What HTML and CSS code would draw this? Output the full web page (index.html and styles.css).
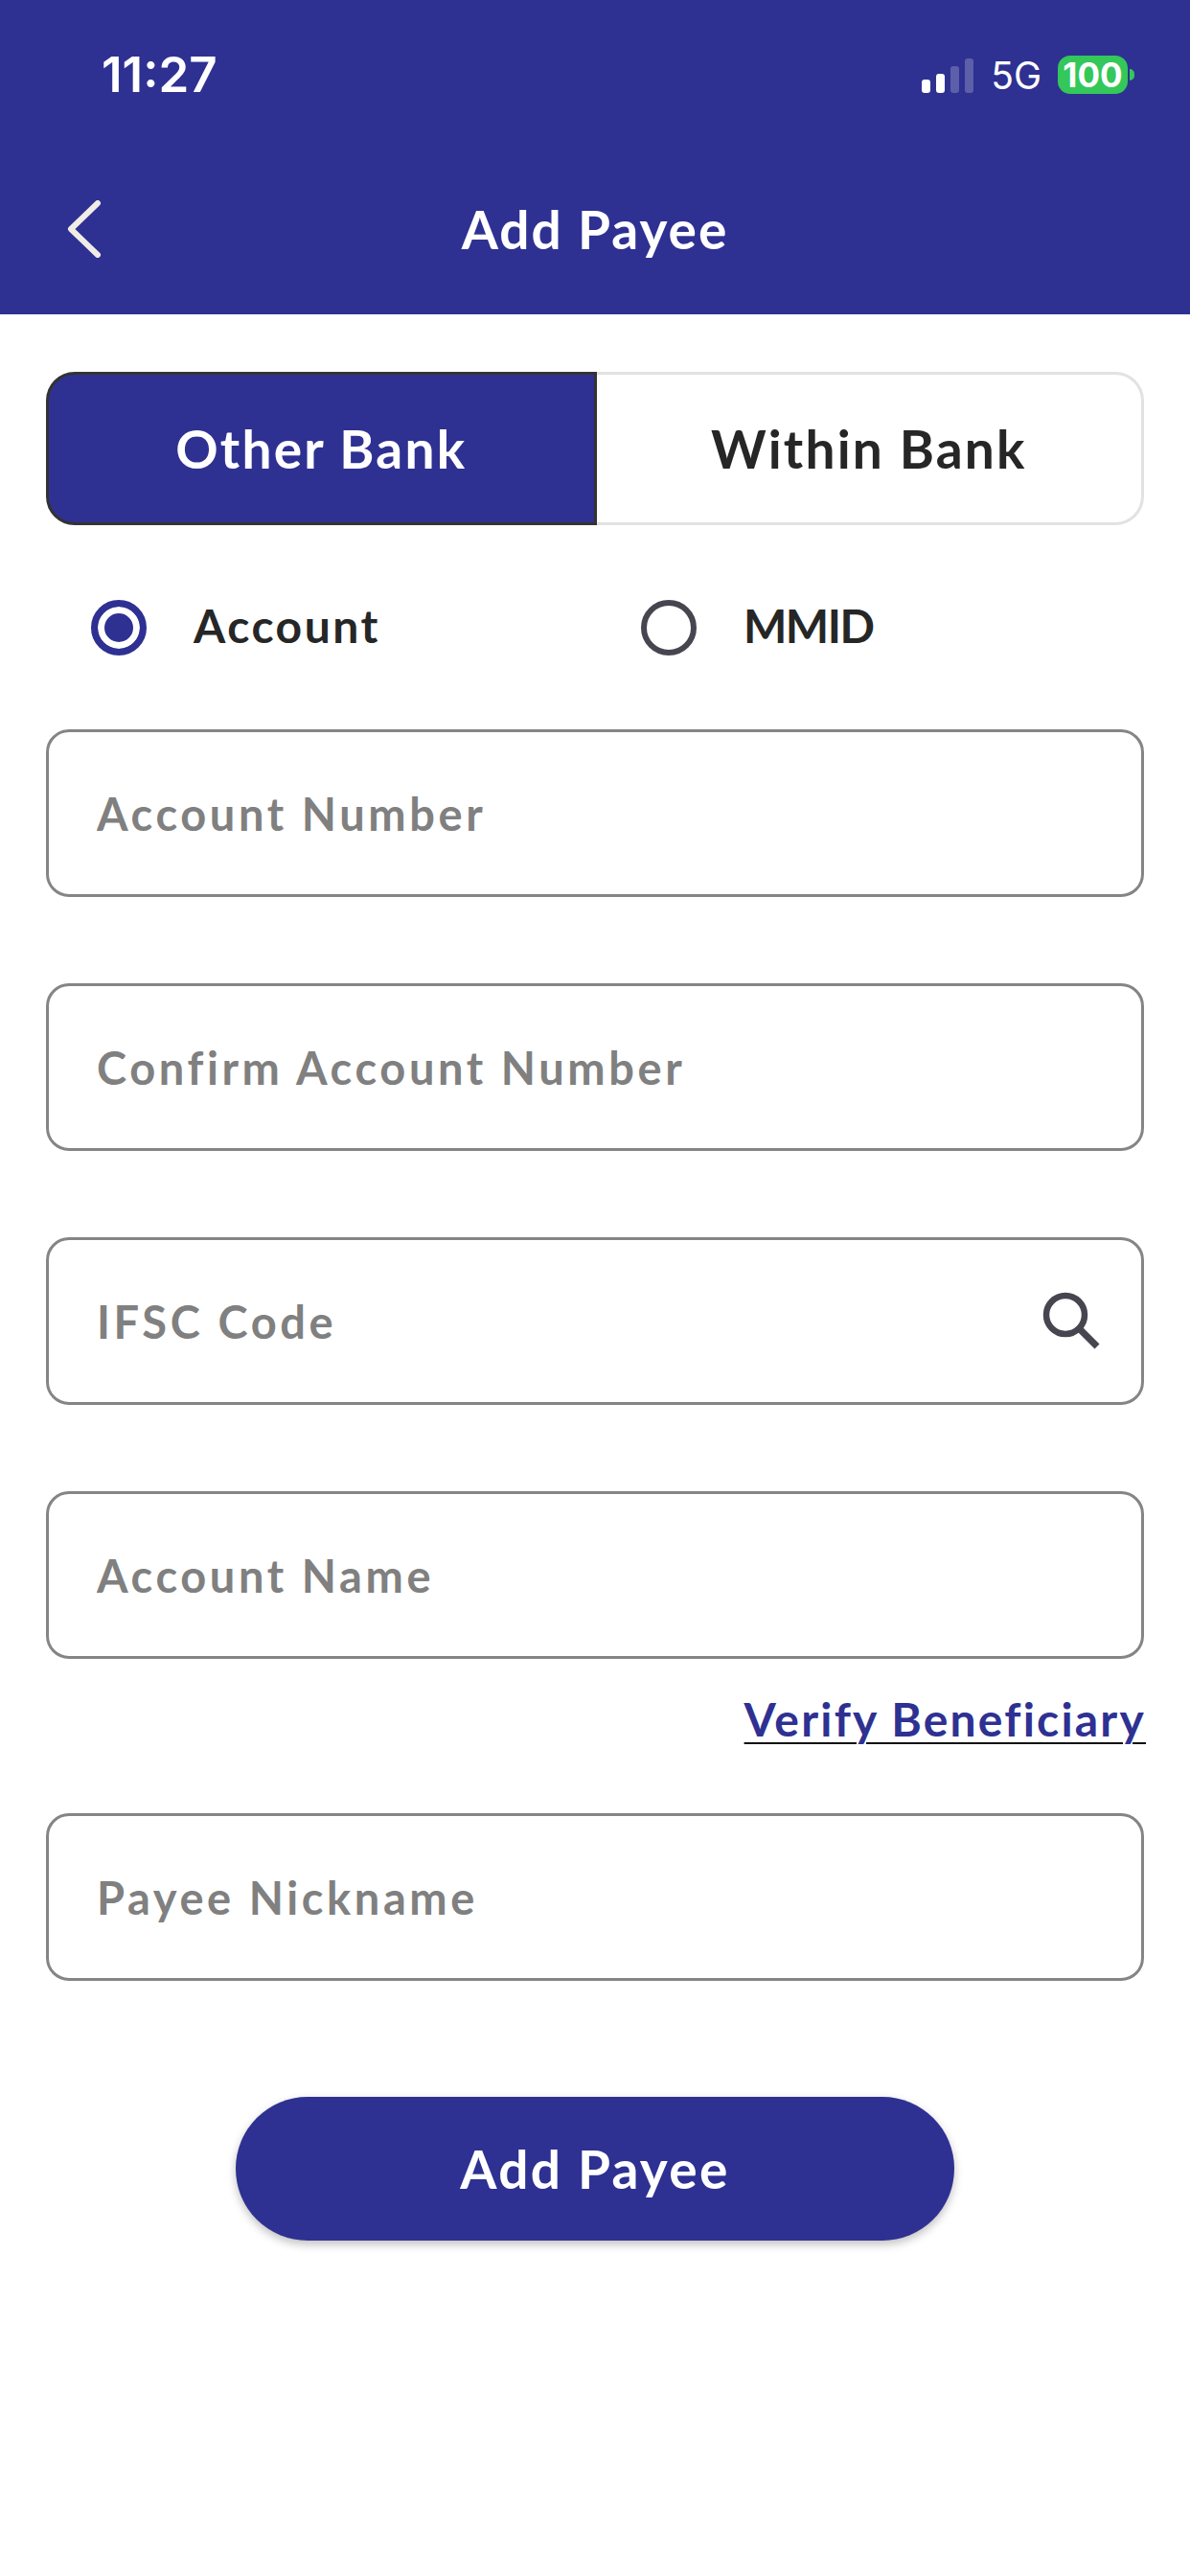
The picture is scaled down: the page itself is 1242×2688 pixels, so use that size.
FILE: index.html
```html
<!DOCTYPE html>
<html lang="en">
<head>
    <meta charset="UTF-8">
    <meta name="viewport" content="width=device-width, initial-scale=1.0">
    <title>Add Payee</title>
    <link rel="stylesheet" href="styles.css">
</head>
<body>
    <header class="header">
        <div class="status-bar">
            <span class="time">11:27</span>
            <div class="status-icons">
                <div class="signal">
                    <i class="bar bar-1"></i>
                    <i class="bar bar-2"></i>
                    <i class="bar bar-3"></i>
                    <i class="bar bar-4"></i>
                </div>
                <span class="network">5G</span>
                <div class="battery">
                    <span class="battery-level">100</span>
                    <i class="battery-nub"></i>
                </div>
            </div>
        </div>
        <div class="title-bar">
            <svg class="back" width="36" height="60" viewBox="0 0 36 60">
                <path d="M32 3 L4 30 L32 57" fill="none" stroke="#f0ece6" stroke-width="6" stroke-linecap="round" stroke-linejoin="round"/>
            </svg>
            <h1 class="title">Add Payee</h1>
        </div>
    </header>

    <main class="content">
        <div class="tabs">
            <button class="tab tab-active">Other Bank</button>
            <button class="tab tab-idle">Within Bank</button>
        </div>

        <div class="radios">
            <div class="radio-option">
                <span class="radio radio-on"></span>
                <span class="radio-label">Account</span>
            </div>
            <div class="radio-option">
                <span class="radio"></span>
                <span class="radio-label radio-label-caps">MMID</span>
            </div>
        </div>

        <form class="form">
            <label class="field"><input type="text" placeholder="Account Number"></label>
            <label class="field"><input type="text" placeholder="Confirm Account Number"></label>
            <label class="field">
                <input type="text" placeholder="IFSC Code">
                <svg class="search" width="64" height="64" viewBox="0 0 64 64">
                    <circle cx="25" cy="25" r="20" fill="none" stroke="#47454f" stroke-width="6.5"/>
                    <path d="M40 40 L58 58" fill="none" stroke="#47454f" stroke-width="7"/>
                </svg>
            </label>
            <div class="field-group">
                <label class="field"><input type="text" placeholder="Account Name"></label>
                <a class="verify" href="#">Verify Beneficiary</a>
            </div>
            <label class="field"><input type="text" placeholder="Payee Nickname"></label>
        </form>

        <button class="submit">Add Payee</button>
    </main>
</body>
</html>
```

FILE: styles.css
```css
* {
    box-sizing: border-box;
}

body {
    margin: 0;
    height: 2688px;
    background-color: #fff;
    font-family: Lato, "Noto Sans", sans-serif;
    color: #262626;
}

.header {
    height: 328px;
    background-color: #2e3192;
    color: #fff;
}

.status-bar {
    height: 150px;
    padding: 58px 58px 0 106px;
    display: flex;
    justify-content: space-between;
}

.time {
    font-family: Inter, sans-serif;
    font-size: 51px;
    font-weight: 600;
    line-height: 40px;
}

.status-icons {
    display: flex;
    align-items: flex-start;
    height: 40px;
}

.signal {
    display: flex;
    align-items: flex-end;
    gap: 6px;
    height: 39px;
    margin-right: 18px;
}

.bar {
    width: 9px;
    background-color: #fff;
    border-radius: 3px;
}

.bar-1 { height: 14px; }
.bar-2 { height: 20px; }
.bar-3 { height: 28px; background-color: #5d5fa8; }
.bar-4 { height: 36px; background-color: #5d5fa8; }

.network {
    font-family: Inter, sans-serif;
    font-size: 39px;
    line-height: 42px;
    margin-right: 17px;
}

.battery {
    display: flex;
    align-items: center;
    gap: 2px;
}

.battery-level {
    width: 73px;
    height: 40px;
    background-color: #34c759;
    border-radius: 13px;
    font-family: Inter, sans-serif;
    font-size: 35px;
    font-weight: 700;
    line-height: 40px;
    text-align: center;
}

.battery-nub {
    width: 5px;
    height: 12px;
    background-color: #34c759;
    border-radius: 0 6px 6px 0;
}

.title-bar {
    height: 178px;
    display: grid;
    grid-template-columns: 1fr auto 1fr;
    align-items: center;
    padding: 0 70px;
}

.title {
    margin: 0;
    font-size: 55px;
    font-weight: 700;
    letter-spacing: 2px;
}

.content {
    padding: 60px 48px 0;
}

.tabs {
    display: flex;
    height: 160px;
}

.tab {
    flex: 1;
    font-family: inherit;
    font-size: 55px;
    font-weight: 700;
    letter-spacing: 2.2px;
}

.tab-active {
    background-color: #2e3192;
    color: #fff;
    border: 3px solid #333;
    border-radius: 30px 0 0 30px;
}

.tab-idle {
    background-color: #fff;
    color: #262626;
    border: 3px solid #e2e2e2;
    border-left: none;
    border-radius: 0 30px 30px 0;
}

.radios {
    display: flex;
    margin-top: 78px;
    padding-left: 47px;
}

.radio-option {
    flex: none;
    width: 574px;
    display: flex;
    align-items: center;
    gap: 49px;
    height: 58px;
}

.radio {
    width: 58px;
    height: 58px;
    border: 6px solid #47454f;
    border-radius: 50%;
}

.radio-on {
    border: 7px solid #2e3192;
    background-color: #2e3192;
    box-shadow: inset 0 0 0 7px #fff;
}

.radio-label {
    padding-bottom: 6px;
    font-size: 48px;
    font-weight: 700;
    letter-spacing: 2.5px;
}

.radio-label-caps {
    letter-spacing: -1.5px;
}

.form {
    display: flex;
    flex-direction: column;
    gap: 90px;
    margin-top: 77px;
}

.field {
    height: 175px;
    display: flex;
    align-items: center;
    padding: 0 40px 0 50px;
    border: 3px solid #858585;
    border-radius: 24px;
}

.field input {
    flex: 1;
    min-width: 0;
    border: none;
    outline: none;
    padding: 0;
    font-family: inherit;
    font-size: 47px;
    font-weight: 700;
    letter-spacing: 3.6px;
    background: none;
}

.field input::placeholder {
    color: #808080;
    opacity: 1;
}

.verify {
    display: block;
    width: fit-content;
    margin: 34px -2px -21px auto;
    color: #2e3192;
    font-size: 48px;
    font-weight: 700;
    letter-spacing: 2.2px;
    line-height: 58px;
    text-decoration: underline #111 2px;
    text-underline-offset: 6px;
}

.submit {
    display: block;
    width: 750px;
    height: 150px;
    margin: 121px auto 0;
    background-color: #2e3192;
    color: #fff;
    border: none;
    border-radius: 75px;
    box-shadow: 0 4px 10px rgba(0, 0, 0, 0.25);
    font-family: inherit;
    font-size: 55px;
    font-weight: 700;
    letter-spacing: 2.3px;
}
```
